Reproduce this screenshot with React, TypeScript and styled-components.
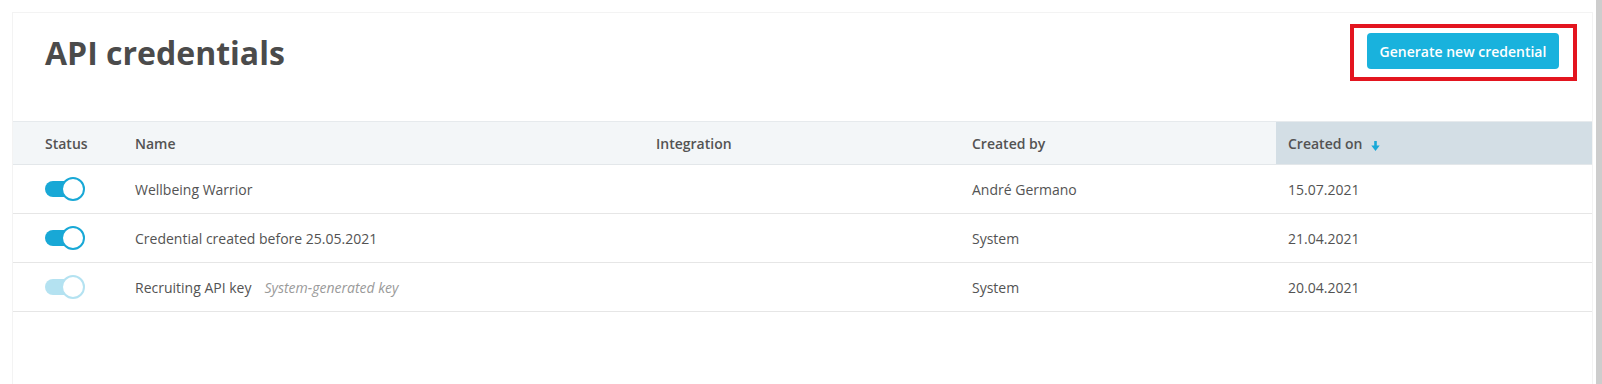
import React from "react";
import styled, { createGlobalStyle } from "styled-components";

const GlobalStyle = createGlobalStyle`
  html, body {
    margin: 0;
    padding: 0;
    background: #ffffff;
    font-family: "Open Sans", "Noto Sans", Arial, sans-serif;
    overflow: hidden;
  }
  * { box-sizing: border-box; }
`;

const Page = styled.div`
  display: flex;
  width: 1602px;
  height: 384px;
  overflow: hidden;
`;

const Main = styled.div`
  flex: 1;
  padding: 12px 3px 0 12px;
`;

const ScrollBar = styled.div`
  width: 6px;
  height: 384px;
  background: #cdcdcd;
`;

const Card = styled.section`
  border: 1px solid #f3f3f3;
  border-bottom: none;
  background: #fff;
  height: 400px;
`;

const TitleRow = styled.div`
  display: flex;
  align-items: center;
  justify-content: space-between;
  padding: 11px 15px 0 32px;
  margin-bottom: 40px;
`;

const Title = styled.h1`
  margin: 0;
  font-size: 32px;
  line-height: 40px;
  font-weight: 700;
  color: #4b4b4b;
`;

const Highlight = styled.div`
  display: flex;
  border: 4px solid #e3151f;
  padding: 5px 14px 8px 13px;
`;

const PrimaryButton = styled.button`
  display: block;
  height: 36px;
  width: 192px;
  border: none;
  border-radius: 4px;
  background: #19b2dd;
  color: #ffffff;
  font-family: "Open Sans", Arial, sans-serif;
  font-size: 14px;
  font-weight: 600;
  white-space: nowrap;
  padding: 0;
  cursor: pointer;
`;

const Table = styled.div`
  border-top: 1px solid #e6eaed;
`;

const Row = styled.div<{ $header?: boolean }>`
  display: grid;
  grid-template-columns: 110px 521px 316px 316px 316px;
  height: ${(p) => (p.$header ? "43px" : "49px")};
  border-bottom: 1px solid ${(p) => (p.$header ? "#e3e7ea" : "#e6e6e6")};
  background: ${(p) => (p.$header ? "#f3f6f8" : "#ffffff")};
`;

const Cell = styled.div<{ $first?: boolean; $sorted?: boolean; $head?: boolean }>`
  display: flex;
  align-items: center;
  padding-left: ${(p) => (p.$first ? "32px" : "12px")};
  background: ${(p) => (p.$sorted ? "#d3dee5" : "transparent")};
  font-size: 14px;
  font-weight: ${(p) => (p.$head ? 600 : 400)};
  color: #535353;
  white-space: nowrap;
`;

const Hint = styled.span`
  font-style: italic;
  color: #9a9a9a;
  margin-left: 13px;
`;

const SortIcon = styled.svg`
  margin-left: 8px;
  margin-top: 5px;
`;

const Toggle = styled.div<{ $disabled?: boolean }>`
  position: relative;
  width: 40px;
  height: 24px;
  opacity: ${(p) => (p.$disabled ? 0.32 : 1)};
`;

const Track = styled.div`
  position: absolute;
  left: 0;
  top: 4px;
  width: 36px;
  height: 16px;
  border-radius: 8px;
  background: #18a8d6;
`;

const Knob = styled.div`
  position: absolute;
  right: 0;
  top: 0;
  width: 24px;
  height: 24px;
  border-radius: 50%;
  background: #ffffff;
  border: 2px solid #18a8d6;
`;

type Cred = {
  name: string;
  hint?: string;
  by: string;
  on: string;
  disabled?: boolean;
};

const rows: Cred[] = [
  { name: "Wellbeing Warrior", by: "André Germano", on: "15.07.2021" },
  { name: "Credential created before 25.05.2021", by: "System", on: "21.04.2021" },
  {
    name: "Recruiting API key",
    hint: "System-generated key",
    by: "System",
    on: "20.04.2021",
    disabled: true,
  },
];

export default function App() {
  return (
    <Page>
      <GlobalStyle />
      <Main>
        <Card>
          <TitleRow>
            <Title>API credentials</Title>
            <Highlight>
              <PrimaryButton>Generate new credential</PrimaryButton>
            </Highlight>
          </TitleRow>
          <Table>
            <Row $header>
              <Cell $first $head>Status</Cell>
              <Cell $head>Name</Cell>
              <Cell $head>Integration</Cell>
              <Cell $head>Created by</Cell>
              <Cell $head $sorted>
                Created on
                <SortIcon width="9" height="10" viewBox="0 0 9 10">
                  <rect x="3.2" y="0" width="2.6" height="5.5" fill="#19a9d8" />
                  <path d="M0.3 4.6 H8.7 L4.5 10 Z" fill="#19a9d8" />
                </SortIcon>
              </Cell>
            </Row>
            {rows.map((r) => (
              <Row key={r.name}>
                <Cell $first>
                  <Toggle $disabled={r.disabled}>
                    <Track />
                    <Knob />
                  </Toggle>
                </Cell>
                <Cell>
                  {r.name}
                  {r.hint && <Hint>{r.hint}</Hint>}
                </Cell>
                <Cell />
                <Cell>{r.by}</Cell>
                <Cell>{r.on}</Cell>
              </Row>
            ))}
          </Table>
        </Card>
      </Main>
      <ScrollBar />
    </Page>
  );
}
